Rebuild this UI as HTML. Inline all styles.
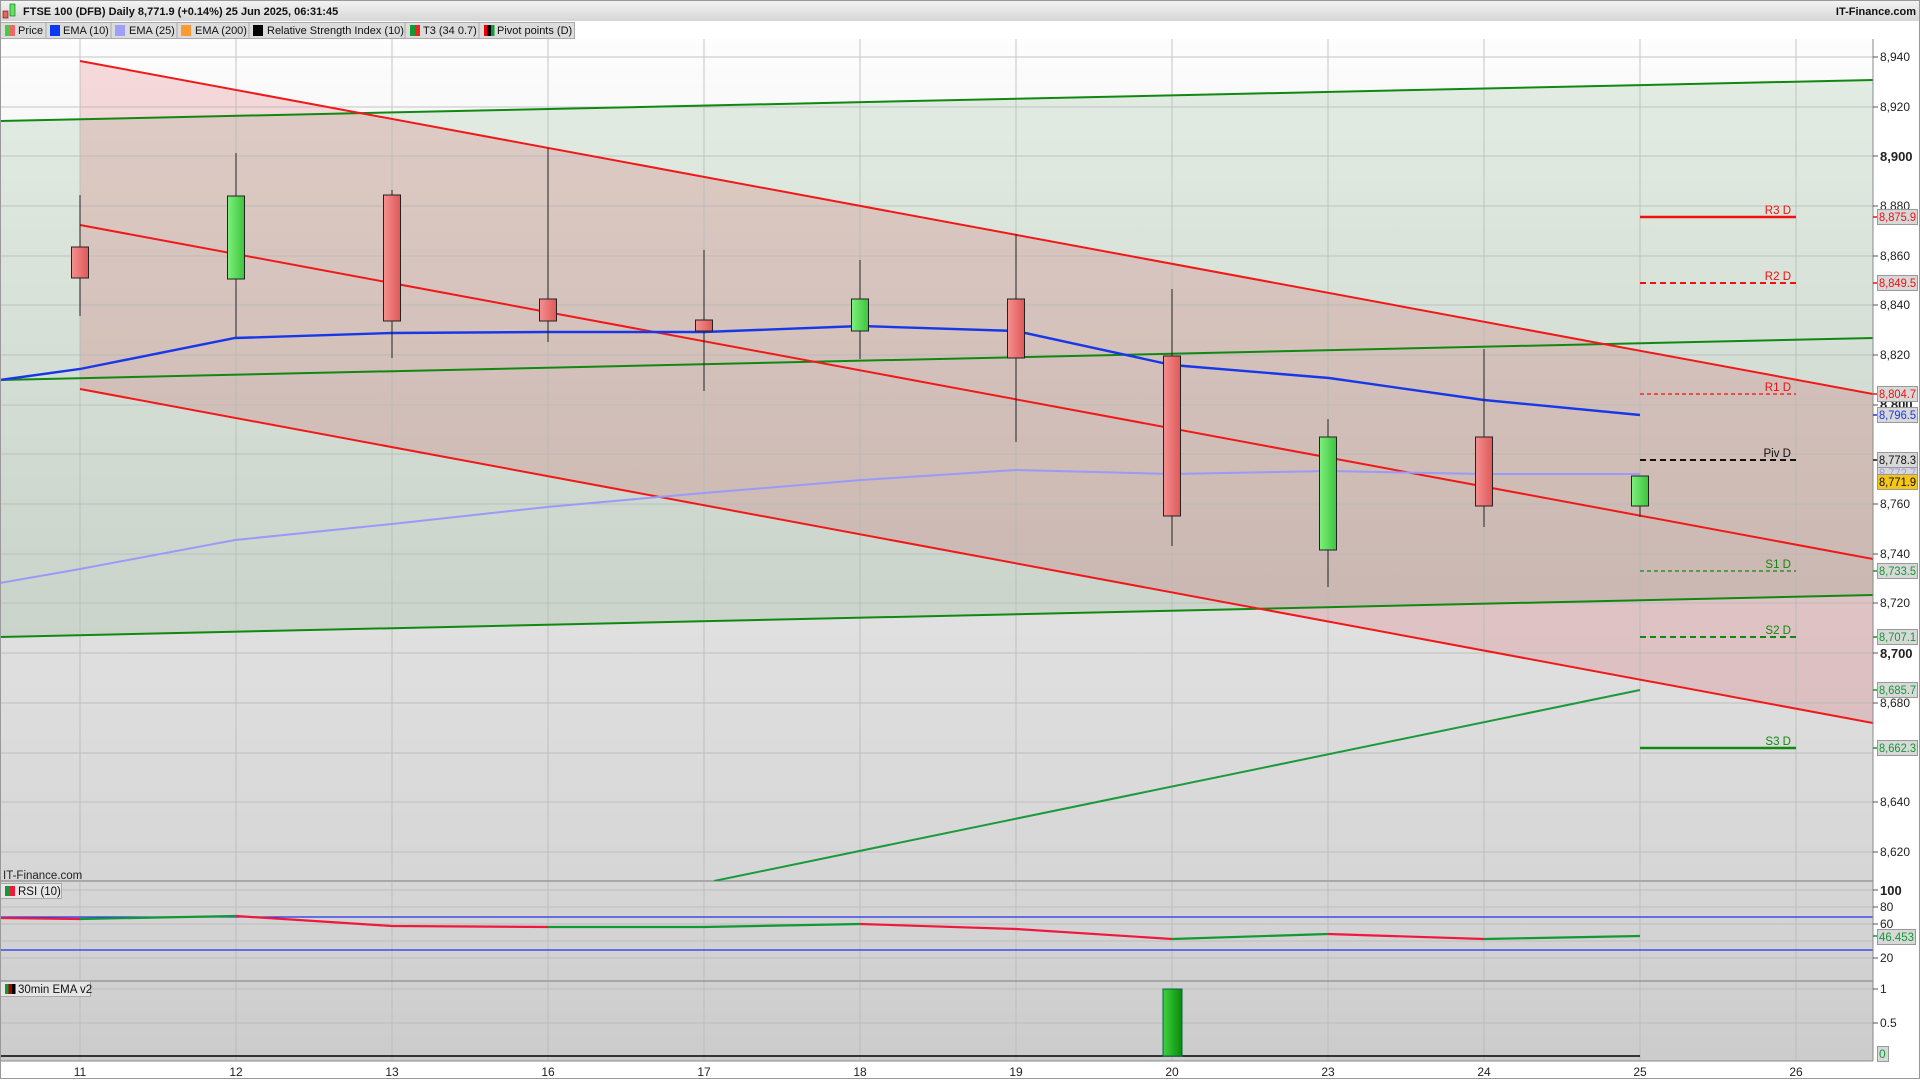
<!DOCTYPE html>
<html><head><meta charset="utf-8"><style>
html,body{margin:0;padding:0;background:#fff;}
svg{display:block;font-family:"Liberation Sans",sans-serif;}
</style></head><body>
<svg width="1920" height="1080" viewBox="0 0 1920 1080" xmlns="http://www.w3.org/2000/svg">
<defs>
<linearGradient id="hdr" x1="0" y1="0" x2="0" y2="1"><stop offset="0" stop-color="#f4f4f4"/><stop offset="1" stop-color="#d6d6d6"/></linearGradient>
<linearGradient id="bg" x1="0" y1="0" x2="0" y2="1"><stop offset="0" stop-color="#fdfdfd"/><stop offset="0.5" stop-color="#e6e6e6"/><stop offset="1" stop-color="#d6d6d6"/></linearGradient>
<linearGradient id="bg2" x1="0" y1="0" x2="0" y2="1"><stop offset="0" stop-color="#d6d6d6"/><stop offset="1" stop-color="#cccccc"/></linearGradient>
<linearGradient id="gc" x1="0" y1="0" x2="1" y2="0"><stop offset="0" stop-color="#7ef07e"/><stop offset="1" stop-color="#3cc43c"/></linearGradient>
<linearGradient id="rc" x1="0" y1="0" x2="1" y2="0"><stop offset="0" stop-color="#f49090"/><stop offset="1" stop-color="#e05858"/></linearGradient>
<linearGradient id="gb" x1="0" y1="0" x2="1" y2="0"><stop offset="0" stop-color="#3fd23f"/><stop offset="1" stop-color="#0a8a0a"/></linearGradient>
<clipPath id="cm"><rect x="0" y="39" width="1873" height="842"/></clipPath>
</defs>
<rect width="1920" height="1080" fill="#fff"/>
<!-- header -->
<rect x="0" y="0" width="1920" height="21" fill="url(#hdr)"/>
<rect x="3" y="11" width="5" height="7" fill="#e86464" stroke="#700" stroke-width="0.6"/>
<rect x="10" y="4" width="5" height="12" fill="#66e066" stroke="#060" stroke-width="0.6"/>
<text x="23" y="15" font-size="11" font-weight="bold" fill="#111">FTSE 100 (DFB) Daily 8,771.9 (+0.14%) 25 Jun 2025, 06:31:45</text>
<text x="1916" y="15" font-size="11" font-weight="bold" fill="#111" text-anchor="end">IT-Finance.com</text>
<!-- panels bg -->
<rect x="0" y="39" width="1873" height="842" fill="url(#bg)"/>
<rect x="0" y="881" width="1873" height="180" fill="url(#bg2)"/>
<g clip-path="url(#cm)">
<polygon points="0,121 1873,80 1873,595 0,637" fill="rgba(60,140,60,0.13)"/>
<polygon points="80,61 1873,394 1873,723 80,389" fill="rgba(210,40,50,0.16)"/>
</g>
<!-- gridlines -->
<g stroke="#b8b8b8" stroke-width="1" opacity="0.8">
<line x1="0" y1="57" x2="1873" y2="57"/><line x1="0" y1="107" x2="1873" y2="107"/><line x1="0" y1="156" x2="1873" y2="156"/><line x1="0" y1="206" x2="1873" y2="206"/><line x1="0" y1="256" x2="1873" y2="256"/><line x1="0" y1="305" x2="1873" y2="305"/><line x1="0" y1="355" x2="1873" y2="355"/><line x1="0" y1="405" x2="1873" y2="405"/><line x1="0" y1="454" x2="1873" y2="454"/><line x1="0" y1="504" x2="1873" y2="504"/><line x1="0" y1="554" x2="1873" y2="554"/><line x1="0" y1="603" x2="1873" y2="603"/><line x1="0" y1="653" x2="1873" y2="653"/><line x1="0" y1="703" x2="1873" y2="703"/><line x1="0" y1="753" x2="1873" y2="753"/><line x1="0" y1="802" x2="1873" y2="802"/><line x1="0" y1="852" x2="1873" y2="852"/>
<line x1="0" y1="890" x2="1873" y2="890"/><line x1="0" y1="907" x2="1873" y2="907"/><line x1="0" y1="924" x2="1873" y2="924"/><line x1="0" y1="941" x2="1873" y2="941"/><line x1="0" y1="958" x2="1873" y2="958"/>
<line x1="0" y1="989" x2="1873" y2="989"/><line x1="0" y1="1023" x2="1873" y2="1023"/>
<line x1="80" y1="39" x2="80" y2="1061"/><line x1="236" y1="39" x2="236" y2="1061"/><line x1="392" y1="39" x2="392" y2="1061"/><line x1="548" y1="39" x2="548" y2="1061"/><line x1="704" y1="39" x2="704" y2="1061"/><line x1="860" y1="39" x2="860" y2="1061"/><line x1="1016" y1="39" x2="1016" y2="1061"/><line x1="1172" y1="39" x2="1172" y2="1061"/><line x1="1328" y1="39" x2="1328" y2="1061"/><line x1="1484" y1="39" x2="1484" y2="1061"/><line x1="1640" y1="39" x2="1640" y2="1061"/><line x1="1796" y1="39" x2="1796" y2="1061"/>
</g>
<line x1="0" y1="881" x2="1873" y2="881" stroke="#999" stroke-width="1.5"/>
<line x1="0" y1="981" x2="1873" y2="981" stroke="#999" stroke-width="1.5"/>
<!-- channel lines -->
<g clip-path="url(#cm)" fill="none" stroke-width="2">
<line x1="0" y1="121" x2="1873" y2="80" stroke="#118811"/>
<line x1="0" y1="380" x2="1873" y2="338" stroke="#118811"/>
<line x1="0" y1="637" x2="1873" y2="595" stroke="#118811"/>
<line x1="80" y1="61" x2="1873" y2="394" stroke="#f01818"/>
<line x1="80" y1="225" x2="1873" y2="559" stroke="#f01818"/>
<line x1="80" y1="389" x2="1873" y2="723" stroke="#f01818"/>
<line x1="714" y1="881" x2="1640" y2="690" stroke="#1a9a3a"/>
<polyline points="0,583 80,569 235,540 392,524 547,507 704,493 861,480 1016,470 1172,474 1329,471 1484,474 1640,474" stroke="#9a9af8"/>
<polyline points="0,380 80,369 235,338 392,333 547,332 704,332 861,326 1016,331 1172,365 1329,378 1484,400 1640,415" stroke="#1838e8" stroke-width="2.4"/>
</g>
<!-- candles -->
<g stroke="#222" stroke-width="1">
<line x1="80" y1="195" x2="80" y2="316"/><rect x="71.5" y="247" width="17" height="31" fill="url(#rc)"/>
<line x1="236" y1="153" x2="236" y2="337"/><rect x="227.5" y="196" width="17" height="83" fill="url(#gc)"/>
<line x1="392" y1="190" x2="392" y2="358"/><rect x="383.5" y="195" width="17" height="126" fill="url(#rc)"/>
<line x1="548" y1="148" x2="548" y2="342"/><rect x="539.5" y="299" width="17" height="22" fill="url(#rc)"/>
<line x1="704" y1="250" x2="704" y2="391"/><rect x="695.5" y="320" width="17" height="11" fill="url(#rc)"/>
<line x1="860" y1="260" x2="860" y2="359"/><rect x="851.5" y="299" width="17" height="32" fill="url(#gc)"/>
<line x1="1016" y1="234" x2="1016" y2="442"/><rect x="1007.5" y="299" width="17" height="59" fill="url(#rc)"/>
<line x1="1172" y1="289" x2="1172" y2="546"/><rect x="1163.5" y="356" width="17" height="160" fill="url(#rc)"/>
<line x1="1328" y1="419" x2="1328" y2="587"/><rect x="1319.5" y="437" width="17" height="113" fill="url(#gc)"/>
<line x1="1484" y1="349" x2="1484" y2="527"/><rect x="1475.5" y="437" width="17" height="69" fill="url(#rc)"/>
<line x1="1640" y1="476" x2="1640" y2="517"/><rect x="1631.5" y="476" width="17" height="30" fill="url(#gc)"/>
</g>
<!-- pivots -->
<g stroke-width="2" fill="none">
<line x1="1640" y1="217" x2="1796" y2="217" stroke="#f01010" stroke-width="2.5"/>
<line x1="1640" y1="283" x2="1796" y2="283" stroke="#f01010" stroke-dasharray="6,4"/>
<line x1="1640" y1="394" x2="1796" y2="394" stroke="#f01010" stroke-width="1.2" stroke-dasharray="4,3"/>
<line x1="1640" y1="460" x2="1796" y2="460" stroke="#111" stroke-dasharray="6,4"/>
<line x1="1640" y1="571" x2="1796" y2="571" stroke="#118811" stroke-width="1.2" stroke-dasharray="4,3"/>
<line x1="1640" y1="637" x2="1796" y2="637" stroke="#118811" stroke-dasharray="6,4"/>
<line x1="1640" y1="748" x2="1796" y2="748" stroke="#118811" stroke-width="2.5"/>
</g>
<g font-size="11.5" text-anchor="end">
<text x="1791" y="214" fill="#f01010">R3 D</text>
<text x="1791" y="280" fill="#f01010">R2 D</text>
<text x="1791" y="391" fill="#f01010">R1 D</text>
<text x="1791" y="457" fill="#111">Piv D</text>
<text x="1791" y="568" fill="#118811">S1 D</text>
<text x="1791" y="634" fill="#118811">S2 D</text>
<text x="1791" y="745" fill="#118811">S3 D</text>
</g>
<!-- RSI -->
<line x1="0" y1="917" x2="1873" y2="917" stroke="#2233ee" stroke-width="1.2"/>
<line x1="0" y1="950" x2="1873" y2="950" stroke="#2233ee" stroke-width="1.2"/>
<g fill="none" stroke-width="2.2">
<polyline points="0,918 80,919" stroke="#f0183c"/>
<polyline points="80,919 236,916" stroke="#119933"/>
<polyline points="236,916 392,926 548,927" stroke="#f0183c"/>
<polyline points="548,927 704,927 860,924" stroke="#119933"/>
<polyline points="860,924 1016,929 1172,939" stroke="#f0183c"/>
<polyline points="1172,939 1328,934" stroke="#119933"/>
<polyline points="1328,934 1484,939" stroke="#f0183c"/>
<polyline points="1484,939 1640,936" stroke="#119933"/>
</g>
<!-- EMA panel -->
<line x1="0" y1="1056" x2="1640" y2="1056" stroke="#000" stroke-width="1.5"/>
<rect x="1163" y="989" width="19" height="67" fill="url(#gb)" stroke="#064" stroke-width="1"/>
<!-- legends -->
<text x="3" y="879" font-size="11.5" fill="#222">IT-Finance.com</text>
<rect x="0.5" y="883.5" width="61" height="15" fill="#e6e6e6" stroke="#aaa"/>
<rect x="5" y="886" width="5" height="10" fill="#119933"/><rect x="10" y="886" width="5" height="10" fill="#f0183c"/>
<text x="18" y="895" font-size="11.5" fill="#111">RSI (10)</text>
<rect x="0.5" y="981.5" width="90" height="15" fill="#e6e6e6" stroke="#aaa"/>
<rect x="5" y="984" width="3.5" height="10" fill="#119933"/><rect x="8.5" y="984" width="3.5" height="10" fill="#a00"/><rect x="12" y="984" width="3.5" height="10" fill="#000"/>
<text x="18" y="993" font-size="11.5" fill="#111">30min EMA v2</text>
<!-- top legend -->
<g font-size="11" fill="#111">
<rect x="0.5" y="22.5" width="574" height="16" fill="#dcdcdc" stroke="#aaa"/>
<g stroke="#aaa"><line x1="46" y1="22" x2="46" y2="38"/><line x1="111" y1="22" x2="111" y2="38"/><line x1="177" y1="22" x2="177" y2="38"/><line x1="249" y1="22" x2="249" y2="38"/><line x1="405" y1="22" x2="405" y2="38"/><line x1="479" y1="22" x2="479" y2="38"/></g>
<rect x="5" y="25" width="5" height="11" fill="#4c4"/><rect x="10" y="25" width="5" height="11" fill="#e66"/>
<text x="18" y="34">Price</text>
<rect x="50" y="25" width="10" height="11" fill="#0a3af0"/><text x="63" y="34">EMA (10)</text>
<rect x="115" y="25" width="10" height="11" fill="#9f9ff8"/><text x="129" y="34">EMA (25)</text>
<rect x="181" y="25" width="10" height="11" fill="#ff9933"/><text x="195" y="34">EMA (200)</text>
<rect x="253" y="25" width="10" height="11" fill="#000"/><text x="267" y="34">Relative Strength Index (10)</text>
<rect x="410" y="25" width="5" height="11" fill="#119933"/><rect x="415" y="25" width="5" height="11" fill="#e22"/><text x="423" y="34">T3 (34 0.7)</text>
<rect x="484" y="25" width="3.5" height="11" fill="#e00"/><rect x="487.5" y="25" width="3.5" height="11" fill="#000"/><rect x="491" y="25" width="3.5" height="11" fill="#119933"/><text x="497" y="34">Pivot points (D)</text>
</g>
<!-- frame -->
<line x1="1873" y1="39" x2="1873" y2="1061" stroke="#888" stroke-width="1"/>
<line x1="0" y1="1061" x2="1873" y2="1061" stroke="#888" stroke-width="1"/>
<rect x="0.5" y="0.5" width="1919" height="1078" fill="none" stroke="#999"/>
<!-- axis ticks & labels -->
<g stroke="#555" stroke-width="1">
<line x1="1873" y1="57" x2="1878" y2="57"/><line x1="1873" y1="107" x2="1878" y2="107"/><line x1="1873" y1="156" x2="1878" y2="156"/><line x1="1873" y1="206" x2="1878" y2="206"/><line x1="1873" y1="256" x2="1878" y2="256"/><line x1="1873" y1="305" x2="1878" y2="305"/><line x1="1873" y1="355" x2="1878" y2="355"/><line x1="1873" y1="405" x2="1878" y2="405"/><line x1="1873" y1="504" x2="1878" y2="504"/><line x1="1873" y1="554" x2="1878" y2="554"/><line x1="1873" y1="603" x2="1878" y2="603"/><line x1="1873" y1="653" x2="1878" y2="653"/><line x1="1873" y1="703" x2="1878" y2="703"/><line x1="1873" y1="802" x2="1878" y2="802"/><line x1="1873" y1="852" x2="1878" y2="852"/>
<line x1="1873" y1="890" x2="1878" y2="890"/><line x1="1873" y1="907" x2="1878" y2="907"/><line x1="1873" y1="924" x2="1878" y2="924"/><line x1="1873" y1="958" x2="1878" y2="958"/><line x1="1873" y1="989" x2="1878" y2="989"/><line x1="1873" y1="1023" x2="1878" y2="1023"/>
</g>
<g font-size="12" fill="#222">
<text x="1880" y="61">8,940</text><text x="1880" y="111">8,920</text><text x="1880" y="161" font-weight="bold" font-size="13">8,900</text><text x="1880" y="210">8,880</text><text x="1880" y="260">8,860</text><text x="1880" y="309">8,840</text><text x="1880" y="359">8,820</text><text x="1880" y="409" font-weight="bold" font-size="13">8,800</text><text x="1880" y="508">8,760</text><text x="1880" y="558">8,740</text><text x="1880" y="607">8,720</text><text x="1880" y="658" font-weight="bold" font-size="13">8,700</text><text x="1880" y="707">8,680</text><text x="1880" y="806">8,640</text><text x="1880" y="856">8,620</text>
<text x="1880" y="895" font-weight="bold" font-size="13">100</text><text x="1880" y="911">80</text><text x="1880" y="928">60</text><text x="1880" y="962">20</text><text x="1880" y="993">1</text><text x="1880" y="1027">0.5</text>
</g>
<!-- value tags -->
<g font-size="12">
<rect x="1877.5" y="209.5" width="40" height="15" fill="#d8d8d8" stroke="#999"/><text x="1879" y="221" fill="#f01010" textLength="37" lengthAdjust="spacingAndGlyphs">8,875.9</text>
<rect x="1877.5" y="275.5" width="40" height="15" fill="#d8d8d8" stroke="#999"/><text x="1879" y="287" fill="#f01010" textLength="37" lengthAdjust="spacingAndGlyphs">8,849.5</text>
<rect x="1877.5" y="386.5" width="40" height="15" fill="#d8d8d8" stroke="#999"/><text x="1879" y="398" fill="#f01010" textLength="37" lengthAdjust="spacingAndGlyphs">8,804.7</text>
<rect x="1877.5" y="407.5" width="40" height="15" fill="#d8d8d8" stroke="#999"/><text x="1879" y="419" fill="#1838e8" textLength="37" lengthAdjust="spacingAndGlyphs">8,796.5</text>
<rect x="1877.5" y="452.5" width="40" height="15" fill="#d8d8d8" stroke="#999"/><text x="1879" y="464" fill="#111" textLength="37" lengthAdjust="spacingAndGlyphs">8,778.3</text>
<rect x="1877.5" y="467.5" width="40" height="10" fill="#d8d8d8" stroke="#999"/><text x="1879" y="477" fill="#9a9af8" textLength="37" lengthAdjust="spacingAndGlyphs">8,772.7</text>
<rect x="1877.5" y="474.5" width="40" height="15" fill="#f5c518" stroke="#999"/><text x="1879" y="486" fill="#111" textLength="37" lengthAdjust="spacingAndGlyphs">8,771.9</text>
<rect x="1877.5" y="563.5" width="40" height="15" fill="#d8d8d8" stroke="#999"/><text x="1879" y="575" fill="#119933" textLength="37" lengthAdjust="spacingAndGlyphs">8,733.5</text>
<rect x="1877.5" y="629.5" width="40" height="15" fill="#d8d8d8" stroke="#999"/><text x="1879" y="641" fill="#119933" textLength="37" lengthAdjust="spacingAndGlyphs">8,707.1</text>
<rect x="1877.5" y="682.5" width="40" height="15" fill="#d8d8d8" stroke="#999"/><text x="1879" y="694" fill="#119933" textLength="37" lengthAdjust="spacingAndGlyphs">8,685.7</text>
<rect x="1877.5" y="740.5" width="40" height="15" fill="#d8d8d8" stroke="#999"/><text x="1879" y="752" fill="#119933" textLength="37" lengthAdjust="spacingAndGlyphs">8,662.3</text>
<rect x="1877.5" y="929.5" width="38" height="15" fill="#d8d8d8" stroke="#999"/><text x="1879" y="941" fill="#119933" textLength="35" lengthAdjust="spacingAndGlyphs">46.453</text>
<rect x="1877.5" y="1046.5" width="11" height="15" fill="#d8d8d8" stroke="#999"/><text x="1879" y="1058" fill="#119933">0</text>
</g>
<g stroke-width="1.5">
<line x1="1873" y1="217" x2="1877" y2="217" stroke="#f01010"/><line x1="1873" y1="283" x2="1877" y2="283" stroke="#f01010"/><line x1="1873" y1="394" x2="1877" y2="394" stroke="#f01010"/><line x1="1873" y1="415" x2="1877" y2="415" stroke="#1838e8"/><line x1="1873" y1="460" x2="1877" y2="460" stroke="#111"/><line x1="1873" y1="571" x2="1877" y2="571" stroke="#119933"/><line x1="1873" y1="637" x2="1877" y2="637" stroke="#119933"/><line x1="1873" y1="690" x2="1877" y2="690" stroke="#119933"/><line x1="1873" y1="748" x2="1877" y2="748" stroke="#119933"/><line x1="1873" y1="936" x2="1877" y2="936" stroke="#119933"/>
</g>
<!-- dates -->
<g font-size="12" fill="#222" text-anchor="middle">
<text x="80" y="1076">11</text><text x="236" y="1076">12</text><text x="392" y="1076">13</text><text x="548" y="1076">16</text><text x="704" y="1076">17</text><text x="860" y="1076">18</text><text x="1016" y="1076">19</text><text x="1172" y="1076">20</text><text x="1328" y="1076">23</text><text x="1484" y="1076">24</text><text x="1640" y="1076">25</text><text x="1796" y="1076">26</text>
</g>
</svg>
</body></html>
